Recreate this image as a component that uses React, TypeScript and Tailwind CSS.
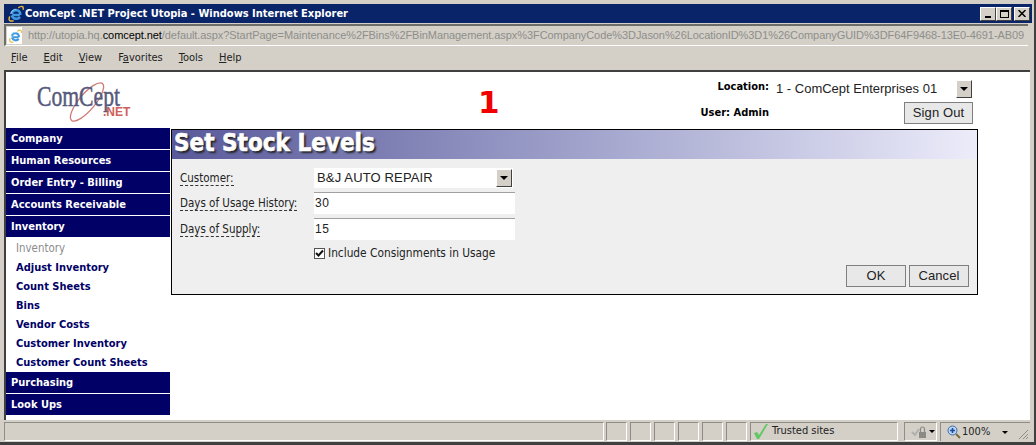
const ui = "[font-family:'DejaVu_Sans_Condensed','DejaVu_Sans',sans-serif]";
const arial = "[font-family:'Liberation_Sans',Arial,sans-serif]";

function IeIcon({ size }: { size: number }) {
  return (
    <svg width={size} height={size} viewBox="0 0 18 18" className="shrink-0">
      <path d="M3 12C1 16 3 18 7 16.5M12 3C15 .5 18 1 17 5" fill="none" stroke="#e8b63c" strokeWidth="1.5" />
      <path d="M13.6 10.5H5.6M5 9.5a4.6 4.6 0 0 1 9-.6v1.6M13.8 12.6a5 5 0 0 1-8.8-1.6" fill="none" stroke="#3f9ae0" strokeWidth="2.6" />
      <path d="M4 9.5a5.6 5.6 0 0 1 6-5" fill="none" stroke="#9ad4f5" strokeWidth="1" />
    </svg>
  );
}

function Arrow() {
  return (
    <div className="w-4 h-full shrink-0 flex items-center justify-center bg-[#d4d0c8] border border-t-white border-l-white border-r-[#404040] border-b-[#404040]">
      <div className="w-0 h-0 border-x-[4px] border-x-transparent border-t-[4px] border-t-black" />
    </div>
  );
}

function WinBtn({ children }: { children: React.ReactNode }) {
  return (
    <div className="w-[16px] h-[14px] bg-[#d4d0c8] border border-t-white border-l-white border-r-[#404040] border-b-[#404040] flex items-center justify-center">
      {children}
    </div>
  );
}

function NavHead({ label }: { label: string }) {
  return (
    <div className={`h-[21px] mb-[1px] bg-[#000066] text-white font-bold text-[11px] leading-[22px] pl-[5px] ${ui}`}>
      {label}
    </div>
  );
}

function NavLink({ label, muted }: { label: string; muted?: boolean }) {
  return (
    <div className={`h-[19px] pl-[10px] leading-[19px] ${ui} ${muted ? 'text-[11.4px] text-[#8c8c8c]' : 'text-[11px] text-[#000066] font-bold'}`}>
      {label}
    </div>
  );
}

function FieldLabel({ label, h }: { label: string; h: string }) {
  return (
    <div className={`${h} flex items-center`}>
      <span className={`text-[11.5px] leading-[14px] text-[#222] border-b border-dashed border-[#333] ${ui}`}>{label}</span>
    </div>
  );
}

function PageBtn({ label, w }: { label: string; w: string }) {
  return (
    <div className={`${w} h-[22px] border border-[#7f7f7f] bg-[#e8e8e8] flex items-center justify-center text-[13px] tracking-[0.1px] text-[#222] ${arial}`}>
      {label}
    </div>
  );
}

function Cell({ w, children }: { w: string; children?: React.ReactNode }) {
  return (
    <div className={`${w} h-[19px] shrink-0 border border-t-[#8e8e88] border-l-[#8e8e88] border-r-white border-b-white flex items-center`}>{children}</div>
  );
}

export default function App() {
  const nav1 = ['Company', 'Human Resources', 'Order Entry - Billing', 'Accounts Receivable', 'Inventory'];
  const links = ['Adjust Inventory', 'Count Sheets', 'Bins', 'Vendor Costs', 'Customer Inventory', 'Customer Count Sheets'];
  return (
    <div className="w-[1036px] h-[445px] overflow-hidden bg-[#d4d0c8] flex flex-col pt-[4px] pl-[4px] pr-[2px] border-b-[3px] border-r-2 border-[#404040]">
      {/* title */}
      <div className="h-[19px] shrink-0 bg-[#0a246a] flex items-center pl-[3px] pr-[2px] gap-[1px]">
        <IeIcon size={17} />
        <div className={`flex-1 text-white font-bold text-[11px] leading-[19px] ${ui}`}>ComCept .NET Project Utopia - Windows Internet Explorer</div>
        <div className="flex">
          <WinBtn><div className="w-[6px] h-[2px] bg-black mt-[6px] -ml-[1px]" /></WinBtn>
          <WinBtn><div className="w-[9px] h-[8px] border border-black border-t-2" /></WinBtn>
          <div className="w-[2px]" />
          <WinBtn>
            <svg width="8" height="7" viewBox="0 0 8 7"><path d="M.5 0l7 7M7.5 0l-7 7" stroke="#000" strokeWidth="1.5" /></svg>
          </WinBtn>
        </div>
      </div>
      {/* address */}
      <div className="h-[24px] shrink-0 flex items-start pt-[1px]">
        <div className="h-[22px] w-[1024px] border-t-2 border-l-2 border-[#6e6e68] border-b border-b-white flex items-center overflow-hidden">
          <div className="w-[15px] h-[17px] ml-[1px] flex items-center justify-center bg-white shrink-0"><IeIcon size={14} /></div>
          <div className={`whitespace-nowrap text-[11px] tracking-[-0.07px] text-[#8e8e8a] pl-[6px] ${arial}`}>
            http://utopia.hq.<span className="text-black">comcept.net</span>/default.aspx?StartPage=Maintenance%2FBins%2FBinManagement.aspx%3FCompanyCode%3DJason%26LocationID%3D1%26CompanyGUID%3DF64F9468-13E0-4691-AB09
          </div>
        </div>
      </div>
      {/* menu */}
      <div className={`h-[23px] shrink-0 flex items-center gap-[16px] pl-[7px] text-[11px] text-[#222] ${ui}`}>
        <span><u>F</u>ile</span><span><u>E</u>dit</span><span><u>V</u>iew</span><span>F<u>a</u>vorites</span><span><u>T</u>ools</span><span><u>H</u>elp</span>
      </div>
      {/* page */}
      <div className="h-[350px] shrink-0 mr-[2px] bg-white border-t-2 border-l-2 border-[#404040] overflow-hidden flex flex-col">
        <div className="h-[56px] shrink-0 flex">
          <div className="w-[164px] shrink-0 pl-[24px] pt-[6px]">
            <svg width="130" height="46" viewBox="0 0 130 46">
              <ellipse cx="57" cy="24" rx="24" ry="8" transform="rotate(-50 57 24)" fill="none" stroke="#d07a74" strokeWidth="1.3" />
              <text x="7" y="28" textLength="83" lengthAdjust="spacingAndGlyphs" fontFamily="Liberation Serif" fontSize="29" fill="#565a7c" stroke="#565a7c" strokeWidth="0.5">ComCept</text>
              <text x="73" y="38" fontFamily="Liberation Sans" fontSize="12" fontWeight="bold" fill="#d0605a">.NET</text>
            </svg>
          </div>
          <span className={`ml-[308px] text-[#f00000] font-bold text-[31px] leading-[61px] [font-family:'DejaVu_Sans',sans-serif]`}>1</span>
          <div className="ml-auto mr-[57px] pt-[7px] w-[282px]">
            <div className="flex items-start h-[20px]">
              <span className={`w-[78px] text-right text-[11px] font-bold leading-[15px] text-black ${ui}`}>Location:</span>
              <div className="ml-[4px] w-[200px] h-[20px] bg-white flex items-center pl-[3px] p-[1px]">
                <span className={`flex-1 whitespace-nowrap text-[13px] text-[#222] ${arial}`}>1 - ComCept Enterprises 01</span>
                <Arrow />
              </div>
            </div>
            <div className="flex items-center h-[22px] mt-[3px]">
              <span className={`w-[78px] text-right text-[11px] font-bold text-black ${ui}`}>User: Admin</span>
              <div className="ml-auto"><PageBtn label="Sign Out" w="w-[69px]" /></div>
            </div>
          </div>
        </div>
        <div className="flex flex-1">
          <div className="w-[164px] shrink-0">
            {nav1.map((n) => <NavHead key={n} label={n} />)}
            <div className="pt-[1px]">
              <NavLink label="Inventory" muted />
              {links.map((n) => <NavLink key={n} label={n} />)}
            </div>
            <NavHead label="Purchasing" />
            <NavHead label="Look Ups" />
          </div>
          <div className="w-[807px] ml-[1px] mt-[1px] h-[166px] border border-black bg-[#efefef] flex flex-col">
            <div className={`h-[29px] shrink-0 bg-gradient-to-r from-[#5a5a9a] to-[#ececfa] text-white font-bold text-[24px] leading-[27px] pl-[2px] [-webkit-text-stroke:0.6px_white] [text-shadow:2px_2px_2px_#222] ${ui}`}>
              Set Stock Levels
            </div>
            <div className="flex-1 pl-[8px] pt-[9px] flex">
              <div className="w-[134px]">
                <FieldLabel label="Customer:" h="h-[20px]" />
                <div className="mt-[4px]"><FieldLabel label="Days of Usage History:" h="h-[22px]" /></div>
                <div className="mt-[4px]"><FieldLabel label="Days of Supply:" h="h-[22px]" /></div>
              </div>
              <div className="w-[201px]">
                <div className="h-[20px] w-[199px] bg-white flex items-center p-[1px] pl-[3px]">
                  <span className={`flex-1 text-[13px] text-[#222] tracking-[0.15px] ${arial}`}>B&amp;J AUTO REPAIR</span>
                  <Arrow />
                </div>
                <div className={`mt-[4px] h-[22px] bg-white border-t border-[#a0a0a0] text-[12px] leading-[20px] pl-[1px] text-[#222] tracking-[0.6px] ${arial}`}>30</div>
                <div className={`mt-[4px] h-[22px] bg-white border-t border-[#a0a0a0] text-[12px] leading-[20px] pl-[1px] text-[#222] tracking-[0.6px] ${arial}`}>15</div>
                <div className={`mt-[5px] flex items-center gap-[3px] whitespace-nowrap text-[11.8px] text-[#222] ${ui}`}>
                  <div className="w-[11px] h-[11px] bg-white border border-[#555] flex items-center justify-center">
                    <svg width="9" height="9" viewBox="0 0 9 9"><path d="M1 4l2.5 2.5L8 1.5" fill="none" stroke="#111" strokeWidth="2" /></svg>
                  </div>
                  Include Consignments in Usage
                </div>
              </div>
              <div className="flex-1 flex items-end justify-end gap-[3px] pr-[8px] pb-[7px]">
                <PageBtn label="OK" w="w-[60px]" />
                <PageBtn label="Cancel" w="w-[60px]" />
              </div>
            </div>
          </div>
        </div>
      </div>
      {/* status */}
      <div className={`mt-[2px] flex items-start text-[11px] text-[#222] overflow-hidden ${ui}`}>
        <Cell w="w-[600px]" />
        <div className="w-[2px] shrink-0" />
        <div className="flex gap-[3px] shrink-0">
          <Cell w="w-[21px]" /><Cell w="w-[21px]" /><Cell w="w-[21px]" /><Cell w="w-[21px]" /><Cell w="w-[21px]" /><Cell w="w-[21px]" />
        </div>
        <div className="w-[3px] shrink-0" />
        <Cell w="w-[148px]">
          <svg width="17" height="17" viewBox="0 0 17 17" className="ml-[1px] shrink-0"><path d="M2 10l3-1 2 3L14 1h2L7 16H5z" fill="#62c862" /></svg>
          <span className="ml-[3px]">Trusted sites</span>
        </Cell>
        <div className="w-[6px] shrink-0" />
        <Cell w="w-[33px]">
          <svg width="17" height="15" viewBox="0 0 17 15" className="ml-[6px] shrink-0">
            <path d="M1 8l3 3 4-6" fill="none" stroke="#b0b0ac" strokeWidth="2" />
            <rect x="8" y="8" width="7" height="6" fill="#8a8a86" />
            <path d="M9.5 8V5a2 2 0 0 1 4 0v3" fill="none" stroke="#8a8a86" strokeWidth="1.2" />
          </svg>
          <div className="ml-[1px] w-0 h-0 border-x-[3px] border-x-transparent border-t-[3px] border-t-black" />
        </Cell>
        <div className="w-[3px] shrink-0" />
        <div className="w-[90px] h-[19px] shrink-0 border-l border-t border-[#8e8e88] flex items-center relative">
          <svg width="14" height="14" viewBox="0 0 14 14" className="ml-[6px] shrink-0">
            <circle cx="5.5" cy="5.5" r="4.5" fill="#bcd6f2" stroke="#3a6ab0" />
            <path d="M3 5.5h5M5.5 3v5" stroke="#1a4a9a" strokeWidth="1.6" />
            <path d="M9 9l4 4" stroke="#7a6a3a" strokeWidth="2" />
          </svg>
          <span className="ml-[1px] text-[11px]">100%</span>
          <div className="ml-[12px] w-0 h-0 border-x-[3px] border-x-transparent border-t-[3px] border-t-black" />
          <svg width="12" height="12" viewBox="0 0 12 12" className="absolute right-[1px] bottom-[1px]">
            <path d="M11 2L2 11M11 6l-5 5M11 9l-2 2" stroke="#8e8e88" strokeWidth="1" />
          </svg>
        </div>
      </div>
    </div>
  );
}
